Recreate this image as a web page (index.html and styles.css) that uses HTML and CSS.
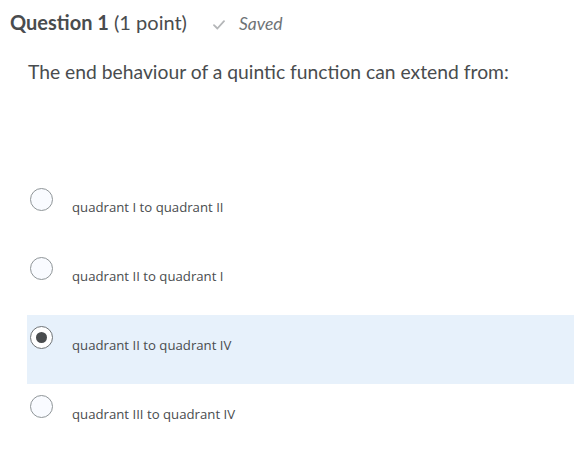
FILE: index.html
```html
<!DOCTYPE html>
<html>
<head>
<meta charset="utf-8">
<link rel="stylesheet" href="styles.css">
</head>
<body>
<div class="page">
  <div class="header">
    <h2 class="title"><strong>Question 1</strong> <span class="pts">(1 point)</span></h2>
    <div class="saved">
      <svg class="check" width="12" height="10" viewBox="0 0 12 10"><path d="M1 5.2 L4.4 8.5 L11 1.2" fill="none" stroke="#b4b6b8" stroke-width="1.8" stroke-linecap="round" stroke-linejoin="round"/></svg>
      <span>Saved</span>
    </div>
  </div>
  <p class="question">The end behaviour of a quintic function can extend from:</p>
  <div class="options">
    <div class="option"><span class="radio"></span><span class="label">quadrant I to quadrant II</span></div>
    <div class="option"><span class="radio"></span><span class="label">quadrant II to quadrant I</span></div>
    <div class="option selected"><span class="radio checked"></span><span class="label">quadrant II to quadrant IV</span></div>
    <div class="option"><span class="radio"></span><span class="label">quadrant III to quadrant IV</span></div>
  </div>
</div>
</body>
</html>
```
FILE: styles.css
```css
html, body {
  margin: 0;
  padding: 0;
  background: #ffffff;
}
.page {
  font-family: Lato, "Open Sans", sans-serif;
  color: #494c4e;
  width: 574px;
  height: 463px;
  overflow: hidden;
}
.header {
  display: flex;
  align-items: baseline;
  padding: 10px 0 0 10px;
  height: 32px;
  box-sizing: border-box;
}
.title {
  margin: 0;
  font-size: 20px;
  line-height: 25px;
  font-weight: 400;
}
.title strong {
  font-weight: 700;
}
.pts {
  font-weight: 400;
}
.saved {
  display: flex;
  align-items: baseline;
  margin-left: 26px;
  font-style: italic;
  font-size: 17.5px;
  color: #6e7376;
}
.check {
  margin-right: 14px;
}
.question {
  margin: 27px 0 0 28px;
  font-size: 19.3px;
  line-height: 26px;
}
.options {
  display: flex;
  flex-direction: column;
  margin-top: 92px;
  padding-left: 27px;
}
.option {
  display: flex;
  align-items: flex-start;
  height: 69px;
  padding-top: 11px;
  box-sizing: border-box;
}
.option.selected {
  background: #e7f1fb;
}
.radio {
  flex: none;
  width: 21px;
  height: 21px;
  margin-left: 3px;
  border: 1px solid #8f9598;
  border-radius: 50%;
  background: #f9fbff;
  position: relative;
}
.radio.checked {
  border-color: #6e7376;
  background: #ffffff;
}
.radio.checked::after {
  content: "";
  position: absolute;
  left: 5px;
  top: 5px;
  width: 11px;
  height: 11px;
  border-radius: 50%;
  background: #494c4e;
}
.label {
  margin-left: 19px;
  margin-top: 10px;
  font-family: "Open Sans", sans-serif;
  font-size: 13.2px;
  line-height: 18px;
}
```
